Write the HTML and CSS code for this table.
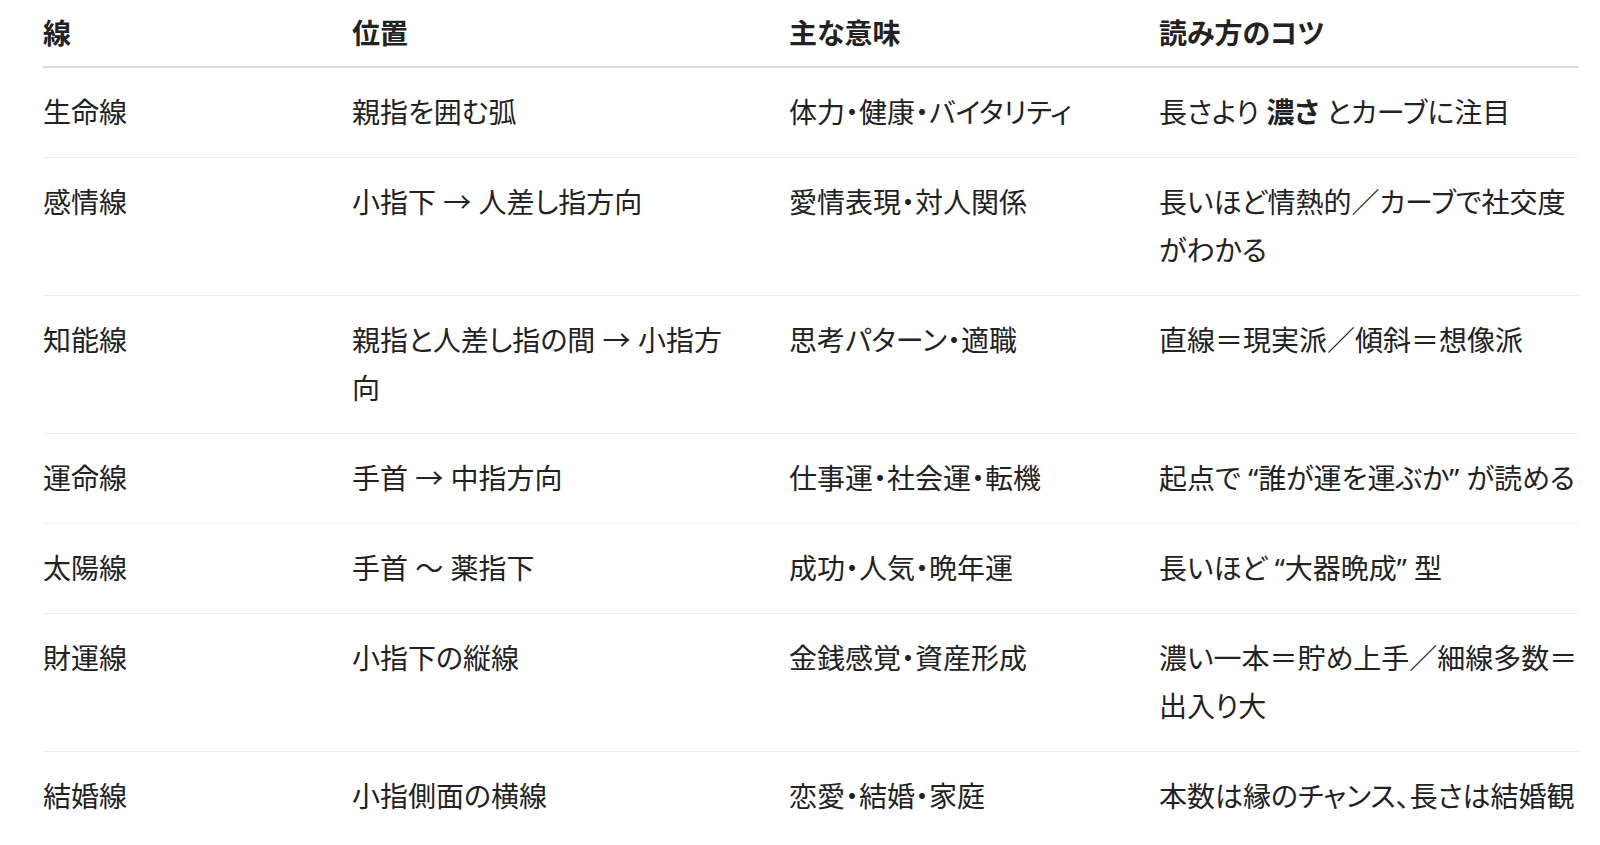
FILE: index.html
```html
<!DOCTYPE html>
<html lang="ja">
<head>
<meta charset="utf-8">
<title>手相の主な線</title>
<link rel="stylesheet" href="styles.css">
</head>
<body>
<div class="wrap">
<table class="lines">
  <thead>
    <tr><th class="c1">線</th><th class="c2">位置</th><th class="c3">主な意味</th><th class="c4">読み方のコツ</th></tr>
  </thead>
  <tbody>
    <tr><td>生命線</td><td>親指を囲む弧</td><td>体力・健康・バイタリティ</td><td>長さより <strong>濃さ</strong> とカーブに注目</td></tr>
    <tr><td>感情線</td><td>小指下 → 人差し指方向</td><td>愛情表現・対人関係</td><td>長いほど情熱的／カーブで社交度がわかる</td></tr>
    <tr><td>知能線</td><td>親指と人差し指の間 → 小指方向</td><td>思考パターン・適職</td><td>直線＝現実派／傾斜＝想像派</td></tr>
    <tr><td>運命線</td><td>手首 → 中指方向</td><td>仕事運・社会運・転機</td><td>起点で “誰が運を運ぶか” が読める</td></tr>
    <tr><td>太陽線</td><td>手首 〜 薬指下</td><td>成功・人気・晩年運</td><td>長いほど “大器晩成” 型</td></tr>
    <tr><td>財運線</td><td>小指下の縦線</td><td>金銭感覚・資産形成</td><td>濃い一本＝貯め上手／細線多数＝出入り大</td></tr>
    <tr><td>結婚線</td><td>小指側面の横線</td><td>恋愛・結婚・家庭</td><td>本数は縁のチャンス、長さは結婚観</td></tr>
  </tbody>
</table>
</div>
</body>
</html>
```

FILE: styles.css
```css
html, body {
  margin: 0;
  padding: 0;
  background: #ffffff;
}
body {
  font-family: "Noto Sans", "Noto Sans CJK JP", sans-serif;
  font-size: 28px;
  line-height: 48px;
  color: #222222;
  font-feature-settings: "palt";
}
.wrap {
  margin: 0 21px 0 43px;
}
.lines {
  width: 100%;
  border-collapse: collapse;
  table-layout: fixed;
}
.lines th,
.lines td {
  box-sizing: border-box;
  text-align: left;
  vertical-align: top;
}
.c1 { width: 309px; }
.c2 { width: 437px; }
.c3 { width: 370px; }
.c4 { width: 420px; }
.lines th {
  font-weight: 700;
  padding: 9px 40px 9px 0;
  border-bottom: 2px solid #dddddd;
}
.lines td {
  padding: 20px 40px 21px 0;
  border-bottom: 1px solid #eeeeee;
  font-weight: 400;
}
.lines td:nth-child(2) {
  padding-right: 67px;
}
.lines th:last-child,
.lines td:last-child {
  padding-right: 0;
}
.lines tbody tr:last-child td {
  border-bottom: none;
}
.lines strong {
  font-weight: 700;
}
```
